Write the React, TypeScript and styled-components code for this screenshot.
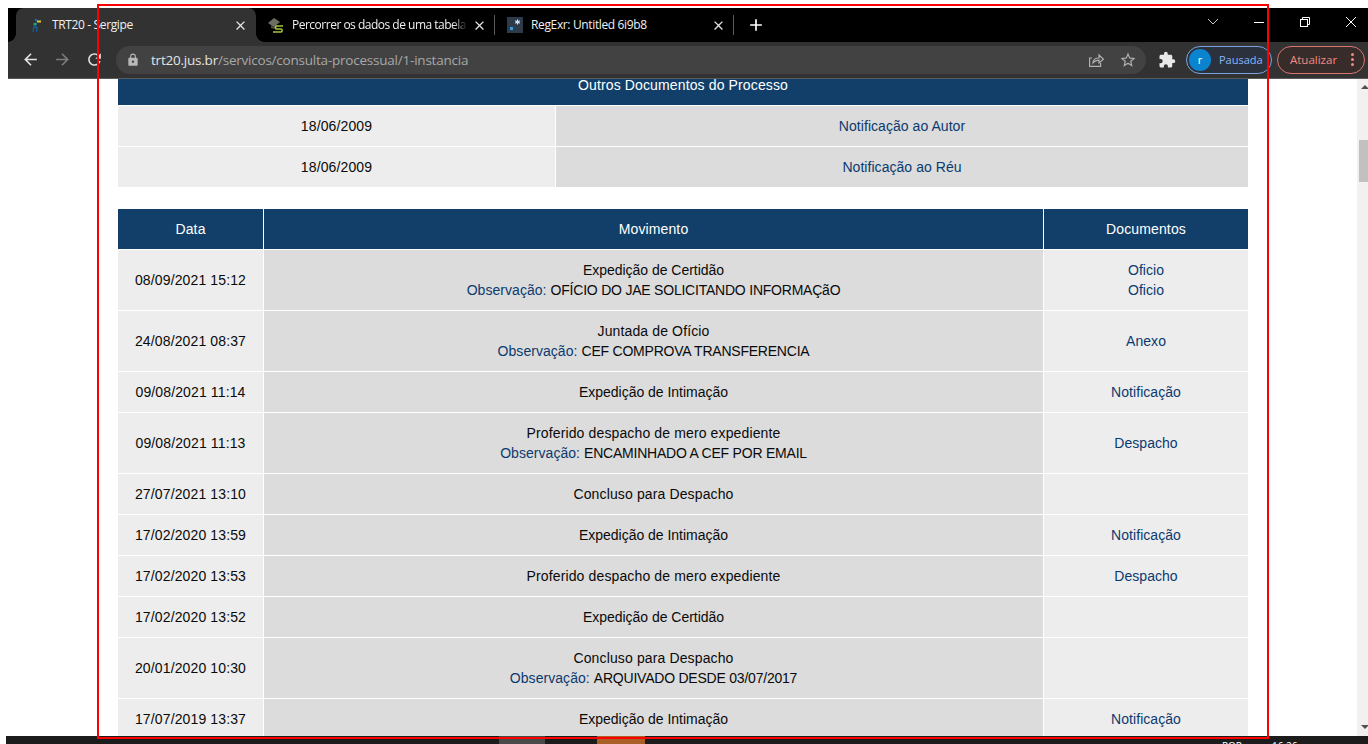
import React from "react";
import styled, { createGlobalStyle } from "styled-components";
import { MdArrowBack, MdArrowForward, MdRefresh, MdLock, MdStarBorder, MdExtension, MdClose, MdAdd } from "react-icons/md";

const Global = createGlobalStyle`
  html, body { margin: 0; padding: 0; background: #fff; overflow: hidden; }
  * { box-sizing: border-box; }
`;

const Page = styled.div`
  position: relative;
  width: 1368px;
  height: 744px;
  overflow: hidden;
  padding-top: 8px;
  display: flex;
  flex-direction: column;
  background: #fff;
  font-family: "Liberation Sans", Arial, sans-serif;
`;
const Browser = styled.div`
  margin-left: 8px;
  height: 728px;
  display: flex;
  flex-direction: column;
`;
const TabStrip = styled.div`
  height: 34px;
  background: #000;
  display: flex;
  align-items: stretch;
  padding-left: 8px;
  flex: none;
`;
const Tab = styled.div<{ $w: number; $active?: boolean }>`
  position: relative;
  width: ${(p) => p.$w}px;
  flex: none;
  display: flex;
  align-items: center;
  background: ${(p) => (p.$active ? "#323232" : "transparent")};
  border-radius: 8px 8px 0 0;
  color: #f0f0f0;
  font: 12px/16px "Open Sans", "Noto Sans", sans-serif;
  padding: 0 ${(p) => (p.$active ? 8 : 7)}px 0 12px;
`;
const Flare = styled.span<{ $side: "left" | "right" }>`
  position: absolute;
  bottom: 0;
  ${(p) => p.$side}: -8px;
  width: 8px;
  height: 8px;
  background: radial-gradient(circle at ${(p) => (p.$side === "left" ? "0 0" : "100% 0")}, #000 7.5px, #323232 8px);
`;
const FaviconSlot = styled.span`
  width: 16px;
  height: 16px;
  flex: none;
  display: block;
  margin-right: 8px;
  svg { display: block; }
`;
const TabTitle = styled.span<{ $fade?: boolean }>`
  flex: 1;
  min-width: 0;
  white-space: nowrap;
  overflow: hidden;
  letter-spacing: ${(p) => (p.$fade ? "-0.5px" : "-0.36px")};
  ${(p) => p.$fade && "mask-image: linear-gradient(90deg, #000 90%, transparent 98%);"}
`;
const TabClose = styled.span`
  width: 16px;
  height: 16px;
  flex: none;
  display: flex;
  align-items: center;
  justify-content: center;
  color: #e6e6e6;
  font-size: 15px;
`;
const TabSep = styled.span`
  width: 1px;
  height: 20px;
  align-self: center;
  background: #5a5a5a;
  flex: none;
`;
const NewTab = styled.span`
  margin-left: 12px;
  align-self: center;
  color: #fff;
  font-size: 20px;
  display: flex;
`;
const WindowControls = styled.div`
  margin-left: auto;
  margin-right: -6px;
  display: flex;
  align-items: flex-start;
  color: #e8e8e8;
`;
const WinButton = styled.span`
  width: 46px;
  height: 28px;
  display: flex;
  align-items: center;
  justify-content: center;
`;
const Toolbar = styled.div`
  height: 37px;
  background: #323232;
  border-bottom: 1px solid #5a5a5a;
  display: flex;
  align-items: center;
  flex: none;
  padding-bottom: 1px;
`;
const NavIcon = styled.span<{ $dim?: boolean }>`
  width: 32px;
  display: flex;
  justify-content: center;
  color: ${(p) => (p.$dim ? "#7d7d7d" : "#e4e4e4")};
  font-size: 19px;
`;
const NavGroup = styled.div`
  display: flex;
  padding-left: 6px;
  width: 108px;
`;
const Omnibox = styled.div`
  width: 1030px;
  height: 28px;
  border-radius: 14px;
  background: #424242;
  display: flex;
  align-items: center;
  padding: 0 2px 0 10px;
  font: 13.5px/18px "Open Sans", "Noto Sans", sans-serif;
  color: #a8a8a8;
  flex: none;
`;
const LockIcon = styled.span`
  color: #b8b8b8;
  font-size: 14px;
  display: flex;
  width: 25px;
`;
const Url = styled.span`
  flex: 1;
  white-space: nowrap;
  letter-spacing: -0.22px;
`;
const Domain = styled.span`
  color: #e4e4e4;
`;
const OmniAction = styled.span`
  width: 32px;
  display: flex;
  justify-content: center;
  color: #b0b0b0;
  font-size: 18px;
`;
const ExtIcon = styled.span`
  width: 40px;
  display: flex;
  justify-content: center;
  padding-left: 2px;
  color: #e8e8e8;
  font-size: 18px;
  flex: none;
`;
const ProfilePill = styled.div`
  width: 86px;
  height: 28px;
  flex: none;
  border-radius: 14px;
  border: 1px solid #7ba3e0;
  background: #2b323e;
  display: flex;
  align-items: center;
  padding-left: 2px;
  font: 11px/14px "Open Sans", "Noto Sans", sans-serif;
  color: #8ab4f8;
`;
const Avatar = styled.span`
  width: 22px;
  height: 22px;
  border-radius: 50%;
  background: #0b84d0;
  color: #fff;
  display: flex;
  align-items: center;
  justify-content: center;
  margin-right: 8px;
  font-size: 11px;
`;
const UpdatePill = styled.div`
  width: 88px;
  height: 28px;
  margin-left: 5px;
  flex: none;
  border-radius: 14px;
  border: 1px solid #d9746c;
  background: #382c2b;
  display: flex;
  align-items: center;
  padding-left: 12px;
  font: 11.5px/14px "Open Sans", "Noto Sans", sans-serif;
  color: #f28b82;
`;
const Dots = styled.span`
  margin-left: 14px;
  display: flex;
  flex-direction: column;
  gap: 2px;
  i {
    display: block;
    width: 3px;
    height: 3px;
    border-radius: 50%;
    background: #f28b82;
  }
`;
const Viewport = styled.div`
  flex: 1;
  min-height: 0;
  display: flex;
  overflow: hidden;
  background: #fff;
`;
const Content = styled.main`
  flex: 1;
  min-width: 0;
  padding-left: 110px;
  margin-top: -14px;
`;
const DataTable = styled.table<{ $gap?: boolean }>`
  width: 1130px;
  table-layout: fixed;
  border-collapse: separate;
  border-spacing: 0;
  margin-top: ${(p) => (p.$gap ? 22 : 0)}px;
  font-size: 14px;
  line-height: 20px;
  letter-spacing: 0.13px;
  color: #0a0a0a;
`;
const HeadCell = styled.th`
  height: 40px;
  padding: 10px;
  background: #123f69;
  color: #fff;
  font-weight: 400;
  text-align: center;
  & + & { border-left: 1px solid #fff; }
`;
const Cell = styled.td<{ $tone: "light" | "dark" }>`
  padding: 10px;
  border-top: 1px solid #fff;
  text-align: center;
  background: ${(p) => (p.$tone === "light" ? "#ededed" : "#dcdcdc")};
  & + & { border-left: 1px solid #fff; }
`;
const DocLink = styled.a`
  display: block;
  color: #0b3a6f;
  letter-spacing: 0.05px;
`;
const MoveText = styled.span<{ $tight?: boolean }>`
  letter-spacing: ${(p) => (p.$tight ? "-0.02px" : "inherit")};
`;
const NoteLabel = styled.span`
  color: #0b3a6f;
  letter-spacing: 0.05px;
`;
const NoteText = styled.span`
  letter-spacing: -0.22px;
`;
const Scrollbar = styled.div`
  width: 11px;
  flex: none;
  background: #f1f1f1;
  display: flex;
  flex-direction: column;
  position: relative;
`;
const ArrowUp = styled.span`
  margin: 6px 0 0 4px;
  width: 0;
  height: 0;
  border-left: 4px solid transparent;
  border-right: 4px solid transparent;
  border-bottom: 4px solid #505050;
`;
const Thumb = styled.span`
  margin: 51px 0 0 2px;
  height: 42px;
  background: #c1c1c1;
`;
const ArrowDown = styled.span`
  margin: auto 0 7px 4px;
  width: 0;
  height: 0;
  border-left: 4px solid transparent;
  border-right: 4px solid transparent;
  border-top: 4px solid #505050;
`;
const Taskbar = styled.footer`
  height: 8px;
  margin-left: 6px;
  background: #1c1c1c;
  display: flex;
  overflow: hidden;
  flex: none;
`;
const TaskItem = styled.span<{ $color: string; $ml: number; $w: number }>`
  margin-left: ${(p) => p.$ml}px;
  width: ${(p) => p.$w}px;
  background: ${(p) => p.$color};
  flex: none;
`;
const TrayText = styled.span`
  margin-left: auto;
  width: 138px;
  padding-top: 4px;
  color: #fff;
  font: 10px/12px "Open Sans", sans-serif;
  display: flex;
  gap: 30px;
  margin-right: 8px;
`;
const Frame = styled.div`
  position: absolute;
  left: 97px;
  top: 4px;
  width: 1172px;
  height: 735px;
  border: 2px solid #f00;
  pointer-events: none;
`;

const TrtIcon = () => (
  <svg width="16" height="16" viewBox="0 0 16 16">
    <circle cx="8" cy="3" r="1.300" fill="#1d6fa8" />
    <path d="M6.500 5.500h2.500l-.8 3.500 1.800 1.800-1 4.200H7.800l.5-3.200-1.700-1.200L5.500 15H4.200l1.300-6z" fill="#155d96" />
    <rect x="9" y="3.500" width="4" height="2" fill="#e5c63a" />
    <rect x="5.500" y="6" width="3" height="2" fill="#2fa05a" />
  </svg>
);
const CapIcon = () => (
  <svg width="16" height="16" viewBox="0 0 16 16">
    <path d="M0 6l6-5 6 4-6 5z" fill="#6a6f62" />
    <path d="M3 8v3l3 1 3-2V7l-3 3z" fill="#4a4e45" />
    <path d="M15 9H8.500C7 9 7 12 8.500 12H13c1.500 0 1.500 3 0 3H5" fill="none" stroke="#a5c539" strokeWidth="1.600" />
  </svg>
);
const RegexIcon = () => (
  <svg width="16" height="16" viewBox="0 0 16 16">
    <rect width="16" height="16" fill="#2c3a4a" />
    <rect x="3" y="10" width="3" height="3" fill="#3a9be0" />
    <path d="M10.500 2.500v5M8.200 3.800l4.600 2.400M12.800 3.800L8.200 6.200" stroke="#cfe6f7" strokeWidth="1.100" />
  </svg>
);
const ShareIcon = () => (
  <svg width="18" height="18" viewBox="0 0 18 18" fill="none" stroke="currentColor" strokeWidth="1.200">
    <path d="M5 7H2.600v8.400h11V12" />
    <path d="M6 12c0-3.500 2.500-5 6-5V4l4.400 4.200L12 12V9.200c-2.500 0-4.500.8-6 2.800z" />
  </svg>
);
const Chevron = () => (
  <svg width="12" height="8" viewBox="0 0 12 8" fill="none" stroke="#c8c8c8">
    <path d="M1 1l5 5 5-5" />
  </svg>
);
const Minimize = () => (
  <svg width="12" height="12" viewBox="0 0 12 12" stroke="#fff">
    <path d="M1 6.500h10" />
  </svg>
);
const Restore = () => (
  <svg width="12" height="12" viewBox="0 0 12 12" fill="none" stroke="#fff">
    <rect x="1.500" y="3.500" width="7" height="7" />
    <path d="M3.500 3.500v-2h7v7h-2" />
  </svg>
);
const CloseWin = () => (
  <svg width="12" height="12" viewBox="0 0 12 12" stroke="#fff">
    <path d="M1 1l10 10M11 1L1 11" />
  </svg>
);

type Row = { date: string; move: string; note?: string; docs?: string[] };
const rows: Row[] = [
  { date: "08/09/2021 15:12", move: "Expedição de Certidão", note: "OFÍCIO DO JAE SOLICITANDO INFORMAÇãO", docs: ["Oficio", "Oficio"] },
  { date: "24/08/2021 08:37", move: "Juntada de Ofício", note: "CEF COMPROVA TRANSFERENCIA", docs: ["Anexo"] },
  { date: "09/08/2021 11:14", move: "Expedição de Intimação", docs: ["Notificação"] },
  { date: "09/08/2021 11:13", move: "Proferido despacho de mero expediente", note: "ENCAMINHADO A CEF POR EMAIL", docs: ["Despacho"] },
  { date: "27/07/2021 13:10", move: "Concluso para Despacho" },
  { date: "17/02/2020 13:59", move: "Expedição de Intimação", docs: ["Notificação"] },
  { date: "17/02/2020 13:53", move: "Proferido despacho de mero expediente", docs: ["Despacho"] },
  { date: "17/02/2020 13:52", move: "Expedição de Certidão" },
  { date: "20/01/2020 10:30", move: "Concluso para Despacho", note: "ARQUIVADO DESDE 03/07/2017" },
  { date: "17/07/2019 13:37", move: "Expedição de Intimação", docs: ["Notificação"] },
];
const otherDocs = [
  { date: "18/06/2009", name: "Notificação ao Autor" },
  { date: "18/06/2009", name: "Notificação ao Réu" },
];

export default function App() {
  return (
    <Page>
      <Global />
      <Browser>
        <TabStrip>
          <Tab $w={240} $active>
            <Flare $side="left" />
            <FaviconSlot><TrtIcon /></FaviconSlot>
            <TabTitle>TRT20 - Sergipe</TabTitle>
            <TabClose><MdClose /></TabClose>
            <Flare $side="right" />
          </Tab>
          <Tab $w={238}>
            <FaviconSlot><CapIcon /></FaviconSlot>
            <TabTitle $fade>Percorrer os dados de uma tabela</TabTitle>
            <TabClose><MdClose /></TabClose>
          </Tab>
          <TabSep />
          <Tab $w={238}>
            <FaviconSlot><RegexIcon /></FaviconSlot>
            <TabTitle>RegExr: Untitled 6i9b8</TabTitle>
            <TabClose><MdClose /></TabClose>
          </Tab>
          <TabSep />
          <NewTab><MdAdd /></NewTab>
          <WindowControls>
            <WinButton><Chevron /></WinButton>
            <WinButton><Minimize /></WinButton>
            <WinButton><Restore /></WinButton>
            <WinButton><CloseWin /></WinButton>
          </WindowControls>
        </TabStrip>
        <Toolbar>
          <NavGroup>
            <NavIcon><MdArrowBack /></NavIcon>
            <NavIcon $dim><MdArrowForward /></NavIcon>
            <NavIcon><MdRefresh /></NavIcon>
          </NavGroup>
          <Omnibox>
            <LockIcon><MdLock /></LockIcon>
            <Url><Domain>trt20.jus.br</Domain>/servicos/consulta-processual/1-instancia</Url>
            <OmniAction><ShareIcon /></OmniAction>
            <OmniAction><MdStarBorder /></OmniAction>
          </Omnibox>
          <ExtIcon><MdExtension /></ExtIcon>
          <ProfilePill><Avatar>r</Avatar>Pausada</ProfilePill>
          <UpdatePill>Atualizar<Dots><i /><i /><i /></Dots></UpdatePill>
        </Toolbar>
        <Viewport>
          <Content>
            <DataTable>
              <colgroup>
                <col width={437} />
                <col />
              </colgroup>
              <thead>
                <tr><HeadCell colSpan={2}>Outros Documentos do Processo</HeadCell></tr>
              </thead>
              <tbody>
                {otherDocs.map((d) => (
                  <tr key={d.name}>
                    <Cell $tone="light">{d.date}</Cell>
                    <Cell $tone="dark"><DocLink>{d.name}</DocLink></Cell>
                  </tr>
                ))}
              </tbody>
            </DataTable>
            <DataTable $gap>
              <colgroup>
                <col width={145} />
                <col width={780} />
                <col />
              </colgroup>
              <thead>
                <tr>
                  <HeadCell>Data</HeadCell>
                  <HeadCell>Movimento</HeadCell>
                  <HeadCell>Documentos</HeadCell>
                </tr>
              </thead>
              <tbody>
                {rows.map((r) => (
                  <tr key={r.date}>
                    <Cell $tone="light">{r.date}</Cell>
                    <Cell $tone="dark">
                      <MoveText $tight={r.move.startsWith("Expedição")}>{r.move}</MoveText>
                      {r.note && (
                        <>
                          <br />
                          <NoteLabel>Observação:</NoteLabel> <NoteText>{r.note}</NoteText>
                        </>
                      )}
                    </Cell>
                    <Cell $tone="light">
                      {r.docs?.map((d, i) => <DocLink key={i}>{d}</DocLink>)}
                    </Cell>
                  </tr>
                ))}
              </tbody>
            </DataTable>
          </Content>
          <Scrollbar>
            <ArrowUp />
            <Thumb />
            <ArrowDown />
          </Scrollbar>
        </Viewport>
      </Browser>
      <Taskbar>
        <TaskItem $color="#4a4a4a" $ml={493} $w={46} />
        <TaskItem $color="#a85f28" $ml={52} $w={48} />
        <TrayText><span>POR</span><span>16:26</span></TrayText>
      </Taskbar>
      <Frame />
    </Page>
  );
}
